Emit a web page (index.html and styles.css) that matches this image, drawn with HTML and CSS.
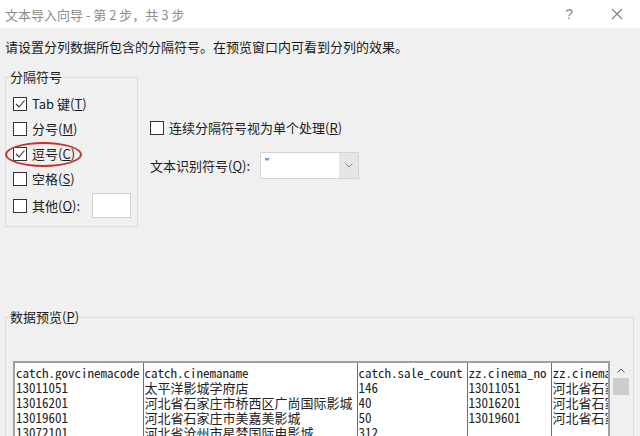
FILE: index.html
```html
<!DOCTYPE html>
<html lang="zh-CN">
<head>
    <meta charset="UTF-8">
    <title>文本导入向导 - 第 2 步，共 3 步</title>
    <link rel="stylesheet" href="styles.css">
</head>
<body>
    <div class="titlebar">
        <span class="title">文本导入向导 - 第 2 步，共 3 步</span>
        <span class="help">?</span>
        <svg class="close" width="12" height="12" viewBox="0 0 12 12">
            <path d="M1 1 L11 11 M11 1 L1 11" stroke="#808080" stroke-width="1.1" fill="none"/>
        </svg>
    </div>
    <div class="dialog">
        <div class="intro">请设置分列数据所包含的分隔符号。在预览窗口内可看到分列的效果。</div>
        <div class="options">
            <fieldset class="group">
                <legend>分隔符号</legend>
                <div class="row">
                    <span class="box checked"><svg width="12" height="12" viewBox="0 0 12 12"><path d="M2 6 L5 9 L10.5 2.5" stroke="#333" stroke-width="1.1" fill="none"/></svg></span>
                    <span>Tab 键(<u>T</u>)</span>
                </div>
                <div class="row">
                    <span class="box"></span>
                    <span>分号(<u>M</u>)</span>
                </div>
                <div class="row marked">
                    <span class="box checked"><svg width="12" height="12" viewBox="0 0 12 12"><path d="M2 6 L5 9 L10.5 2.5" stroke="#333" stroke-width="1.1" fill="none"/></svg></span>
                    <span>逗号(<u>C</u>)</span>
                    <div class="circle"></div>
                </div>
                <div class="row">
                    <span class="box"></span>
                    <span>空格(<u>S</u>)</span>
                </div>
                <div class="row other">
                    <span class="box"></span>
                    <span>其他(<u>O</u>):</span>
                    <span class="textbox"></span>
                </div>
            </fieldset>
            <div class="side">
                <div class="row">
                    <span class="box"></span>
                    <span>连续分隔符号视为单个处理(<u>R</u>)</span>
                </div>
                <div class="qualifier">
                    <span>文本识别符号(<u>Q</u>):</span>
                    <div class="combo">
                        <span class="value">"</span>
                        <span class="arrow"><svg width="8" height="5" viewBox="0 0 8 5"><path d="M0.5 0.5 L4 4 L7.5 0.5" stroke="#888" stroke-width="1" fill="none"/></svg></span>
                    </div>
                </div>
            </div>
        </div>
        <fieldset class="preview">
            <legend>数据预览(<u>P</u>)</legend>
            <div class="grid-wrap">
                <table class="data">
                    <colgroup>
                        <col class="c1"><col class="c2"><col class="c3"><col class="c4"><col class="c5">
                    </colgroup>
                    <tr class="first">
                        <td>catch.govcinemacode</td>
                        <td>catch.cinemaname</td>
                        <td>catch.sale_count</td>
                        <td>zz.cinema_no</td>
                        <td>zz.cinema_name</td>
                    </tr>
                    <tr>
                        <td>13011051</td>
                        <td>太平洋影城学府店</td>
                        <td>146</td>
                        <td>13011051</td>
                        <td>河北省石家庄市</td>
                    </tr>
                    <tr>
                        <td>13016201</td>
                        <td>河北省石家庄市桥西区广尚国际影城</td>
                        <td>40</td>
                        <td>13016201</td>
                        <td>河北省石家庄市</td>
                    </tr>
                    <tr>
                        <td>13019601</td>
                        <td>河北省石家庄市美嘉美影城</td>
                        <td>50</td>
                        <td>13019601</td>
                        <td>河北省石家庄市</td>
                    </tr>
                    <tr>
                        <td>13072101</td>
                        <td>河北省沧州市星梦国际电影城</td>
                        <td>312</td>
                        <td></td>
                        <td></td>
                    </tr>
                </table>
                <div class="scroll">
                    <svg width="8" height="5" viewBox="0 0 8 5"><path d="M0.5 4.5 L4 1 L7.5 4.5" stroke="#555" stroke-width="1" fill="none"/></svg>
                    <div class="thumb"></div>
                </div>
            </div>
        </fieldset>
    </div>
</body>
</html>
```

FILE: styles.css
```css
* {
    box-sizing: border-box;
}
html, body {
    margin: 0;
    padding: 0;
}
body {
    width: 640px;
    height: 436px;
    overflow: hidden;
    background-color: #f0f0f0;
    color: #1a1a1a;
    font-family: "Noto Sans CJK SC", "Noto Sans", sans-serif;
    font-size: 13px;
}
.titlebar {
    height: 28px;
    background-color: white;
    display: flex;
    align-items: center;
    padding: 0 17px 0 5px;
}
.title {
    flex: 1;
    color: #8c8c8c;
    font-size: 13px;
}
.help {
    color: #8c8c8c;
    font-family: "Liberation Sans", sans-serif;
    font-size: 14px;
    margin-right: 38px;
}
.dialog {
    padding: 0 5px;
}
.intro {
    margin-top: 10px;
    line-height: 18px;
}
.options {
    display: flex;
    align-items: flex-start;
    margin-top: 12px;
}
fieldset {
    margin: 0;
    border: 1px solid #dcdcdc;
    padding: 0;
}
legend {
    padding: 0;
    margin-left: -3px;
    line-height: 18px;
}
.group {
    width: 133px;
    height: 159px;
    padding: 5px 0 0 7px;
}
.row {
    display: flex;
    align-items: center;
    height: 25px;
    gap: 5px;
    position: relative;
    white-space: nowrap;
}
.box {
    flex: none;
    width: 14px;
    height: 14px;
    border: 1px solid #333;
    background-color: white;
    display: flex;
    align-items: center;
    justify-content: center;
}
.other {
    margin-top: 2px;
}
.textbox {
    width: 39px;
    height: 25px;
    margin-left: 7px;
    background-color: white;
    border: 1px solid #d0d0d0;
}
.circle {
    position: absolute;
    left: -8px;
    top: 1px;
    width: 77px;
    height: 25px;
    border: 2.5px solid #c6312b;
    border-radius: 50%;
}
.side {
    margin-left: 12px;
    padding-top: 47px;
}
.qualifier {
    display: flex;
    align-items: center;
    margin-top: 12px;
}
.combo {
    margin-left: 10px;
    width: 99px;
    height: 27px;
    display: flex;
    background-color: white;
    border: 1px solid #d4d4d4;
}
.value {
    flex: 1;
    padding: 3px 0 0 4px;
    font-family: "Liberation Sans", sans-serif;
    font-size: 11px;
}
.arrow {
    width: 19px;
    background-color: #e6e6e6;
    display: flex;
    align-items: center;
    justify-content: center;
}
.preview {
    margin-top: 81px;
    width: 629px;
    height: 140px;
    padding: 35px 0 0 7px;
}
.grid-wrap {
    display: flex;
    align-items: flex-start;
}
.data {
    table-layout: fixed;
    border-collapse: collapse;
    width: 595px;
    background-color: white;
    border-top: 2px solid #a0a0a0;
    border-left: 2px solid #a0a0a0;
    border-right: 2px solid #a0a0a0;
    font-family: "Noto Sans Mono CJK SC", "Liberation Mono", "Noto Sans CJK SC", monospace;
    font-size: 13px;
}
.c1 { width: 129px; }
.c2 { width: 214px; }
.c3 { width: 110px; }
.c4 { width: 84px; }
.c5 { width: 58px; }
.data td {
    border-left: 1px solid #6e6e6e;
    padding: 0 0 0 1px;
    height: 15px;
    line-height: 15px;
    white-space: nowrap;
    overflow: hidden;
    color: #222;
}
.data tr.first td {
    padding-top: 2px;
    height: 17px;
}
.scroll {
    width: 18px;
    display: flex;
    flex-direction: column;
    align-items: center;
    padding-top: 7px;
    margin-left: 2px;
}
.thumb {
    width: 16px;
    height: 17px;
    margin-top: 5px;
    background-color: #cdcdcd;
}
```
